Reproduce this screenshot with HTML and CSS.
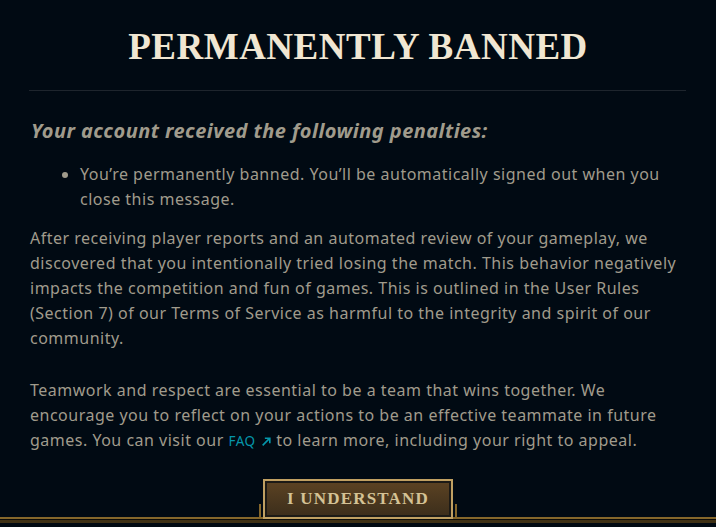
FILE: index.html
```html
<!DOCTYPE html>
<html lang="en">
<head>
<meta charset="utf-8">
<title>Permanently Banned</title>
<link rel="stylesheet" href="styles.css">
</head>
<body>
<div class="modal">
  <header class="header">
    <h1 class="title">PERMANENTLY BANNED</h1>
  </header>
  <div class="divider"></div>
  <main class="content">
    <h2 class="subhead">Your account received the following penalties:</h2>
    <ul class="penalties">
      <li>You’re permanently banned. You’ll be automatically signed out when you close this message.</li>
    </ul>
    <p class="para">After receiving player reports and an automated review of your gameplay, we discovered that you intentionally tried losing the match. This behavior negatively impacts the competition and fun of games. This is outlined in the User Rules (Section 7) of our Terms of Service as harmful to the integrity and spirit of our community.</p>
    <p class="para">Teamwork and respect are essential to be a team that wins together. We encourage you to reflect on your actions to be an effective teammate in future games. You can visit our <a class="faq" href="#">FAQ</a><svg class="faq-icon" viewBox="0 0 10 10" width="11" height="11" aria-hidden="true"><path d="M1.5 8.5 L8 2 M3.5 2 H8 V6.5" fill="none" stroke="#0596aa" stroke-width="1.5"/></svg> to learn more, including your right to appeal.</p>
  </main>
  <footer class="footer">
    <span class="tab"></span>
    <button class="btn" type="button">I UNDERSTAND</button>
    <span class="tab"></span>
  </footer>
</div>
</body>
</html>
```

FILE: styles.css
```css
html, body {
  margin: 0;
  padding: 0;
  background: #010a13;
}
.modal {
  width: 716px;
  height: 527px;
  display: flex;
  flex-direction: column;
  overflow: hidden;
}
.header {
  padding-top: 25px;
  text-align: center;
}
.title {
  margin: 0;
  font-family: "Liberation Serif", serif;
  font-weight: bold;
  font-size: 37px;
  line-height: 44px;
  letter-spacing: 0.5px;
  color: #f0e6d2;
}
.divider {
  margin: 21px 30px 0 29px;
  height: 1px;
  background: #1e252d;
}
.content {
  padding: 0 30px;
  color: #a09b8c;
  font-family: "Noto Sans", sans-serif;
  font-size: 16px;
  line-height: 25px;
  letter-spacing: 0.5px;
}
.subhead {
  margin: 28px 0 0 1px;
  font-family: "Noto Sans", sans-serif;
  font-style: italic;
  font-weight: bold;
  font-size: 20px;
  line-height: 24px;
  letter-spacing: 0.45px;
  color: #a09b8c;
}
.penalties {
  margin: 19px 0 0 0;
  padding-left: 50px;
}
.para {
  margin: 14px 0 0 0;
}
.para + .para {
  margin-top: 27px;
}
.faq {
  color: #0596aa;
  text-decoration: none;
  font-size: 13.5px;
  letter-spacing: 0.5px;
}
.faq-icon {
  margin-left: 5px;
  vertical-align: -1px;
}
.footer {
  margin-top: auto;
  position: relative;
  display: flex;
  justify-content: center;
  align-items: flex-end;
  gap: 2px;
  padding-bottom: 8px;
}
.footer::before {
  content: "";
  position: absolute;
  left: 0;
  right: 0;
  bottom: 4px;
  height: 6px;
  background: linear-gradient(#85672b 0 2px, #0c0c09 2px 3px, #3f3115 3px 6px);
}
.tab {
  position: relative;
  width: 2px;
  height: 13px;
  margin-bottom: 2px;
  background: #85672b;
}
.btn {
  position: relative;
  width: 190px;
  height: 40px;
  border: 2px solid #c0a062;
  box-shadow: inset 0 0 0 2px #1c1a16;
  background: linear-gradient(#5c4323, #3b2d1b);
  color: #d4c295;
  font-family: "Liberation Serif", serif;
  font-weight: bold;
  font-size: 17px;
  letter-spacing: 1.2px;
  padding: 0;
  cursor: pointer;
}
```
